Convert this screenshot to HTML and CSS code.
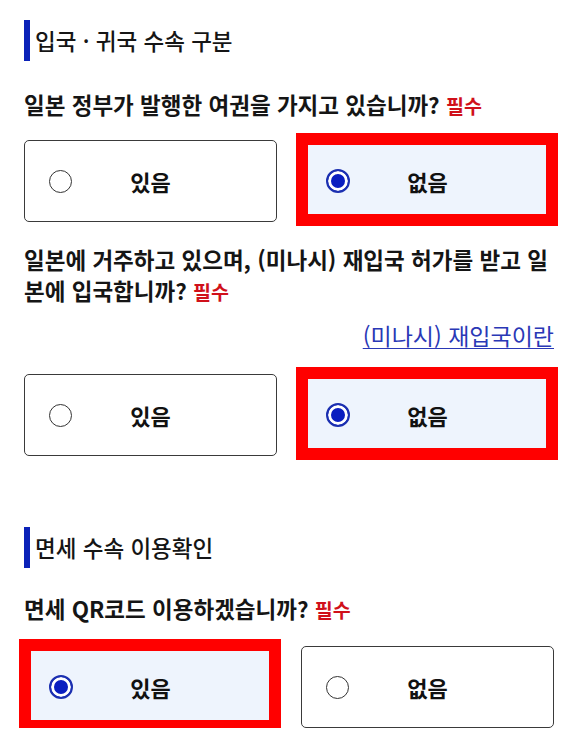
FILE: index.html
```html
<!DOCTYPE html>
<html lang="ko">
<head>
<meta charset="utf-8">
<title>입국 · 귀국 수속 구분</title>
<link rel="stylesheet" href="styles.css">
</head>
<body>
<main class="page">
  <section class="block">
    <h2 class="section-title">입국 · 귀국 수속 구분</h2>

    <p class="question q-first">일본 정부가 발행한 여권을 가지고 있습니까? <span class="required">필수</span></p>
    <div class="options">
      <div class="option"><span class="radio"></span><span class="label">있음</span></div>
      <div class="option is-selected"><span class="radio"></span><span class="label">없음</span></div>
    </div>

    <p class="question q-second">일본에 거주하고 있으며, (미나시) 재입국 허가를 받고 일본에 입국합니까? <span class="required">필수</span></p>
    <div class="link-row"><a class="help-link" href="#">(미나시) 재입국이란</a></div>
    <div class="options options-after-link">
      <div class="option"><span class="radio"></span><span class="label">있음</span></div>
      <div class="option is-selected"><span class="radio"></span><span class="label">없음</span></div>
    </div>
  </section>

  <section class="block block-second">
    <h2 class="section-title">면세 수속 이용확인</h2>
    <p class="question q-third">면세 QR코드 이용하겠습니까? <span class="required">필수</span></p>
    <div class="options">
      <div class="option is-selected"><span class="radio"></span><span class="label">있음</span></div>
      <div class="option"><span class="radio"></span><span class="label">없음</span></div>
    </div>
  </section>
</main>
</body>
</html>
```

FILE: styles.css
```css
* {
  box-sizing: border-box;
}

html, body {
  margin: 0;
  padding: 0;
  background: #ffffff;
}

body {
  font-family: "Noto Sans CJK KR", "Noto Sans", sans-serif;
  color: #151515;
}

.page {
  padding: 20px 21px 0 24px;
}

.section-title {
  margin: 0;
  height: 41px;
  display: flex;
  align-items: center;
  border-left: 6px solid #0b22b8;
  padding-left: 5px;
  font-size: 22.5px;
  font-weight: 500;
  line-height: 1;
  color: #151515;
}

.question {
  margin: 0;
  font-size: 22.5px;
  font-weight: 700;
  line-height: 31px;
  color: #151515;
  word-break: break-all;
}

.q-first {
  margin-top: 28px;
}

.q-second {
  margin-top: 22px;
}

.q-third {
  margin-top: 25px;
}

.required {
  color: #d0101a;
  font-size: 19.5px;
  font-weight: 700;
  line-height: 1;
}

.link-row {
  margin-top: 14px;
  text-align: right;
  line-height: 30px;
}

.help-link {
  color: #2a38b6;
  font-size: 23px;
  font-weight: 400;
  text-decoration: underline;
  text-underline-offset: 3px;
  text-decoration-thickness: 1px;
}

.options {
  display: grid;
  grid-template-columns: 253px 253px;
  column-gap: 24px;
  margin-top: 20px;
}

.options-after-link {
  margin-top: 21px;
}

.block-second {
  margin-top: 71px;
}

.block-second .options {
  margin-top: 22px;
}

.option {
  position: relative;
  height: 82px;
  border: 1.5px solid #3a3a3a;
  border-radius: 5px;
  background: #ffffff;
  display: grid;
  grid-template-columns: 24px 1fr 24px;
  align-items: center;
  padding: 0 24px;
}

.radio {
  width: 23px;
  height: 23px;
  border-radius: 50%;
  border: 1.5px solid #333333;
  background: #ffffff;
}

.label {
  text-align: center;
  font-size: 22px;
  font-weight: 700;
  color: #111111;
  line-height: 1;
}

.option.is-selected {
  background: #eef4fd;
  border-color: #1b2fb0;
}

.option.is-selected .radio {
  width: 24px;
  height: 24px;
  border: 2px solid #1b2fb0;
  background: #0a1ec0;
  box-shadow: inset 0 0 0 3px #ffffff;
}

.option.is-selected::after {
  content: "";
  position: absolute;
  top: -8px;
  left: -6px;
  right: -5px;
  bottom: -5px;
  border: 12px solid #ff0000;
  pointer-events: none;
}
```
